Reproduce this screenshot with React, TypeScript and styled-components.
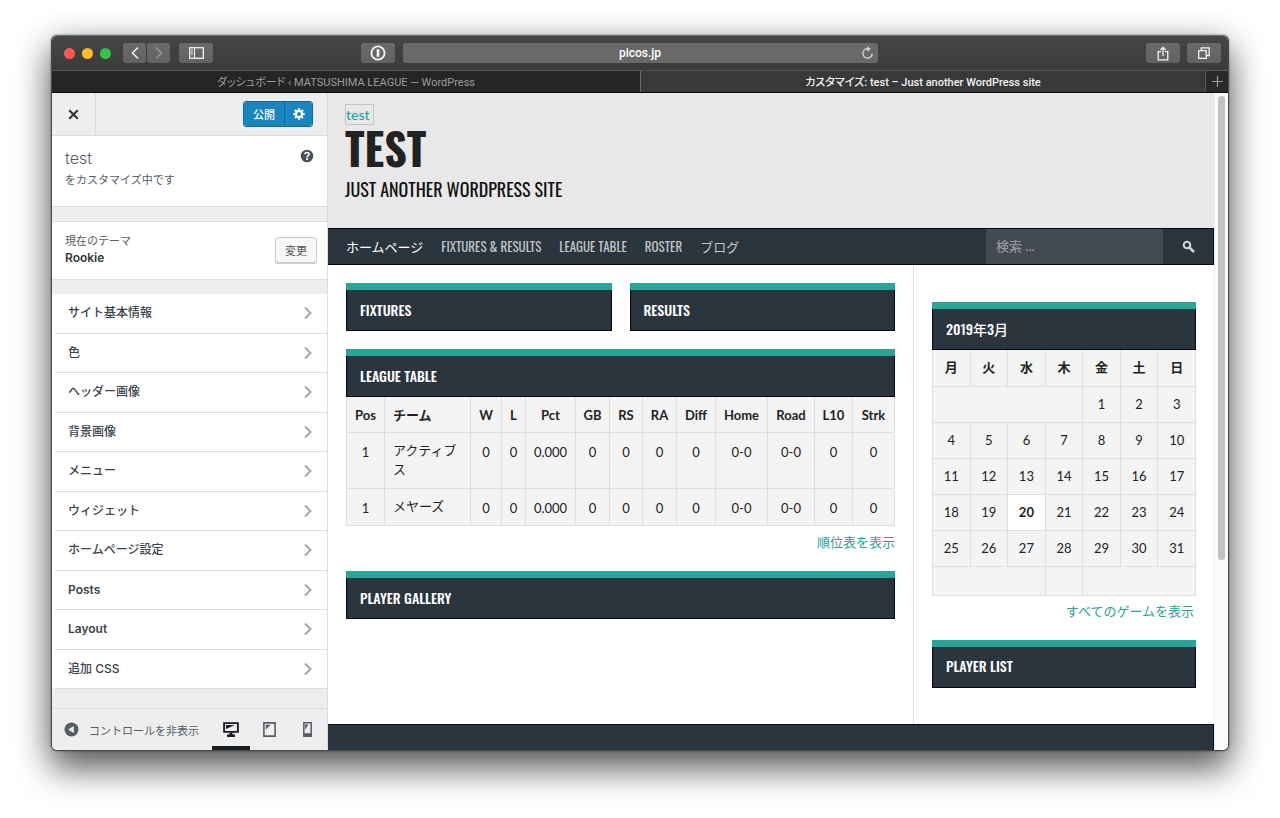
import React from "react";
import styled, { createGlobalStyle } from "styled-components";

const ui = `Roboto, "Noto Sans CJK JP", sans-serif`;
const uiWide = `Inter, "Noto Sans CJK JP", sans-serif`;
const body = `Lato, "Noto Sans CJK JP", sans-serif`;
const display = `Oswald, "Noto Sans CJK JP", sans-serif`;
const navy = "#2b353e";
const edge = "#05090d";
const teal = "#26a598";
const line = "#dfdfdf";

const GlobalStyle = createGlobalStyle`
  *, *::before, *::after { box-sizing: border-box; }
  body { margin: 0; background: #fff; font-family: ${ui}; font-size: 12px; color: #222; }
  button, input { font: inherit; margin: 0; }
  h1, h2, h3, p, ul { margin: 0; padding: 0; }
  ul { list-style: none; }
  a { text-decoration: none; }
`;

const Desktop = styled.div`
  padding: 35px 51px 67px;
  min-height: 100vh;
  display: flex;
`;

const BrowserWindow = styled.div`
  flex: 1;
  min-width: 0;
  display: flex;
  flex-direction: column;
  border: 1px solid #4a4a4a;
  border-top-color: #6e6e6e;
  border-radius: 6px;
  overflow: hidden;
  background: #fff;
  box-shadow: 0 0 2px rgba(0, 0, 0, 0.5), 0 18px 34px rgba(0, 0, 0, 0.58), 0 4px 36px rgba(0, 0, 0, 0.2);
`;

/* ---------- browser chrome ---------- */

const Toolbar = styled.header`
  height: 34px;
  display: flex;
  align-items: center;
  gap: 8px;
  padding: 0 7px;
  background: linear-gradient(#474646, #3c3b3b);
`;

const ToolbarSide = styled.div<{ $end?: boolean }>`
  flex: 1;
  display: flex;
  align-items: center;
  gap: 7px;
  justify-content: ${(p) => (p.$end ? "flex-end" : "space-between")};
`;

const Cluster = styled.div<{ $gap: number }>`
  display: flex;
  align-items: center;
  gap: ${(p) => p.$gap}px;
`;

const Lights = styled(Cluster)`
  padding: 0 3px 0 5px;
`;

const Light = styled.button<{ $color: string }>`
  width: 11px;
  height: 11px;
  padding: 0;
  border: 0;
  border-radius: 50%;
  background: ${(p) => p.$color};
`;

const ToolButton = styled.button<{ $narrow?: boolean; $dim?: boolean }>`
  width: ${(p) => (p.$narrow ? 23 : 34)}px;
  height: 20px;
  padding: 0;
  border: 0;
  border-radius: 3px;
  display: grid;
  place-items: center;
  background: linear-gradient(#6b6a6a, #636262);
  color: ${(p) => (p.$dim ? "#959595" : "#f2f2f2")};
`;

const AddressBar = styled.label`
  flex: 0 1 475px;
  height: 20px;
  display: flex;
  align-items: center;
  padding: 0 4px 0 17px;
  border-radius: 3px;
  background: #6a6969;
  color: #d8d8d8;
`;

const AddressInput = styled.input`
  flex: 1;
  min-width: 0;
  border: 0;
  padding: 0;
  background: transparent;
  color: #fff;
  text-align: center;
  font-size: 12px;
  font-weight: 500;
`;

const PlainButton = styled.button`
  border: 0;
  padding: 0;
  background: transparent;
  color: inherit;
  display: grid;
  place-items: center;
`;

const TabStrip = styled.div`
  display: grid;
  grid-template-columns: 1fr 1fr;
  height: 23px;
  background: #262525;
  border-top: 1px solid #5a5959;
  border-bottom: 1px solid #0c0c0c;
`;

const TabCell = styled.div`
  display: flex;
  min-width: 0;
`;

const Tab = styled.button<{ $active?: boolean }>`
  flex: 1;
  min-width: 0;
  border: 0;
  padding: 0 0 2px;
  font-size: 11px;
  font-feature-settings: "palt";
  background: ${(p) => (p.$active ? "#3a3939" : "#262525")};
  color: ${(p) => (p.$active ? "#f2f2f2" : "#9c9c9c")};
  font-weight: ${(p) => (p.$active ? 500 : 400)};
  border-left: ${(p) => (p.$active ? "1px solid #6a6a6a" : "0")};
`;

const NewTab = styled.button`
  width: 23px;
  border: 0;
  border-left: 1px solid #565656;
  padding: 0;
  display: grid;
  place-items: center;
  background: #2a2929;
  color: #9a9a9a;
`;

const Viewport = styled.div`
  flex: 1;
  display: flex;
  min-height: 0;
`;

/* ---------- customizer ---------- */

const Panel = styled.aside`
  flex: 0 0 276px;
  display: flex;
  flex-direction: column;
  background: #eee;
  border-right: 1px solid #ddd;
`;

const PanelTop = styled.div`
  height: 43px;
  display: flex;
  align-items: center;
  justify-content: space-between;
  padding-right: 14px;
  border-bottom: 1px solid #ddd;
`;

const CloseButton = styled(PlainButton)`
  width: 44px;
  height: 42px;
  border-right: 1px solid #ddd;
  color: #333;
`;

const Publish = styled.div`
  display: flex;
  height: 26px;
  border: 1px solid #0f6ba0;
  border-radius: 3px;
  overflow: hidden;
`;

const PublishButton = styled.button<{ $wide?: boolean }>`
  width: ${(p) => (p.$wide ? 41 : 27)}px;
  border: 0;
  border-right: ${(p) => (p.$wide ? "1px solid #0f6ba0" : "0")};
  padding: 0;
  display: grid;
  place-items: center;
  background: #1b85bd;
  color: #fff;
  font-size: 11px;
  font-weight: 500;
`;

const PanelCard = styled.section<{ $tall?: boolean }>`
  height: ${(p) => (p.$tall ? 71 : 59)}px;
  display: flex;
  justify-content: space-between;
  align-items: ${(p) => (p.$tall ? "flex-start" : "center")};
  padding: ${(p) => (p.$tall ? "11px 13px 0 13px" : "0 10px 2px 13px")};
  margin-bottom: 14px;
  background: #fff;
  border-bottom: 1px solid #ddd;
  border-top: ${(p) => (p.$tall ? "0" : "1px solid #ddd")};
`;

const HelpButton = styled(PlainButton)`
  height: 18px;
`;

const SiteName = styled.h2`
  font-family: ${uiWide};
  font-size: 16px;
  line-height: 22px;
  font-weight: 300;
  color: #555d66;
`;

const Muted = styled.p<{ $loose?: boolean }>`
  font-size: 11px;
  line-height: ${(p) => (p.$loose ? 24 : 16)}px;
  color: #555d66;
`;

const ThemeName = styled.h3`
  font-family: ${uiWide};
  font-size: 12px;
  line-height: 16px;
  font-weight: 600;
  color: #32373c;
`;

const ChangeButton = styled.button`
  width: 42px;
  height: 26px;
  padding: 0;
  border: 1px solid #ccc;
  border-radius: 3px;
  background: #f7f7f7;
  box-shadow: 0 1px 0 #ccc;
  color: #555;
  font-size: 11px;
`;

const SectionList = styled.ul`
  flex: 1;
  display: flex;
  flex-direction: column;
  margin-bottom: 19px;
`;

const SectionItem = styled.li`
  flex: 1;
  display: flex;
  padding-left: 3px;
  background: #fff;
`;

const SectionButton = styled.button`
  flex: 1;
  display: flex;
  align-items: center;
  justify-content: space-between;
  padding: 0 15px 0 13px;
  border: 0;
  border-bottom: 1px solid #ddd;
  background: #fff;
  color: #3b444d;
  font-family: ${uiWide};
  font-size: 12px;
  line-height: 18px;
  svg { color: #a0a5aa; }
`;

const SectionName = styled.span<{ $cjk: boolean }>`
  font-weight: ${(p) => (p.$cjk ? 500 : 600)};
`;

const PanelFooter = styled.div`
  height: 42px;
  display: flex;
  padding-right: 1px;
  border-top: 1px solid #ddd;
  color: #555d66;
`;

const Collapse = styled(PlainButton)`
  display: flex;
  align-items: center;
  gap: 10px;
  flex: 1;
  padding-left: 12px;
  font-size: 11px;
  white-space: nowrap;
`;

const Device = styled(PlainButton)<{ $active?: boolean }>`
  width: 38px;
  box-shadow: inset 0 -4px ${(p) => (p.$active ? "#191e23" : "transparent")};
  color: ${(p) => (p.$active ? "#191e23" : "#555d66")};
`;

/* ---------- site preview ---------- */

const Site = styled.div`
  flex: 1;
  min-width: 0;
  display: flex;
  flex-direction: column;
  font-family: ${body};
  font-size: 13px;
  background: #fff;
`;

const SiteHeader = styled.header`
  height: 135px;
  padding: 11px 17px 0;
  background: #e8e8e8;
`;

const HeaderLink = styled.a`
  display: block;
  width: fit-content;
  padding: 0 3px 0 0;
  border: 1px solid #c4c4c4;
  color: #1aa899;
  font-size: 14px;
  line-height: 19px;
  font-weight: 500;
`;

const SiteTitle = styled.h1`
  font-family: ${display};
  font-size: 44px;
  line-height: 46px;
  font-weight: 700;
  color: #222;
`;

const Tagline = styled.p`
  font-family: ${display};
  font-size: 18px;
  line-height: 36px;
  color: #111;
`;

const Nav = styled.nav`
  height: 37px;
  display: flex;
  align-items: stretch;
  justify-content: space-between;
  background: ${navy};
  border: solid ${edge};
  border-width: 1px 1px 1px 0;
`;

const NavLinks = styled.ul`
  display: flex;
  align-items: center;
  gap: 18px;
  padding: 0 0 2px 18px;
`;

const NavLink = styled.a<{ $current?: boolean }>`
  font-family: ${display};
  font-size: 13px;
  line-height: 20px;
  white-space: nowrap;
  color: ${(p) => (p.$current ? "#fff" : "#c2c5c7")};
`;

const Search = styled.form`
  display: flex;
`;

const SearchInput = styled.input`
  width: 177px;
  border: 0;
  padding: 0 10px 2px;
  background: #434a53;
  color: #fff;
  &::placeholder { color: #a0a3a6; opacity: 1; }
`;

const SearchButton = styled(PlainButton)`
  width: 50px;
  color: #d4d7d9;
`;

const Columns = styled.div`
  display: flex;
  height: 459px;
`;

const Main = styled.main`
  flex: 1;
  min-width: 0;
  padding: 18px;
`;

const SideColumn = styled.aside`
  flex: 0 0 301px;
  padding: 37px 18px 0;
  border-left: 1px solid ${line};
`;

const Pair = styled.div`
  display: grid;
  grid-template-columns: 1fr 1fr;
  gap: 18px;
  margin-bottom: 18px;
`;

const Banner = styled.h2`
  height: 48px;
  display: flex;
  align-items: center;
  padding: 0 14px 2px;
  background: ${navy};
  border-top: 7px solid ${teal};
  box-shadow: inset 1px 0 ${edge}, inset -1px -1px ${edge};
  color: #fff;
  font-family: ${display};
  font-size: 14px;
  line-height: 20px;
  font-weight: 500;
`;

const Table = styled.table`
  width: 100%;
  table-layout: fixed;
  border-collapse: collapse;
  background: #f4f4f4;
  font-size: 13px;
  line-height: 19px;
  color: #222;
`;

const LeagueCell = styled.td<{ $left?: boolean }>`
  border: 1px solid ${line};
  border-top-width: ${(p) => (p.as === "th" ? 0 : 1)}px;
  padding: ${(p) => (p.as === "th" ? "9px 0 7px" : p.$left ? "8px 8px 9px" : "10px 0 7px")};
  text-align: ${(p) => (p.$left ? "left" : "center")};
  padding-left: ${(p) => (p.$left ? 8 : 0)}px;
  vertical-align: top;
  font-weight: ${(p) => (p.as === "th" ? 700 : 400)};
`;

const DayCell = styled.td<{ $today?: boolean; $last?: boolean }>`
  height: ${(p) => (p.$last ? 29 : 36)}px;
  border: 1px solid ${line};
  border-top-width: ${(p) => (p.as === "th" ? 0 : 1)}px;
  padding: 0;
  text-align: center;
  background: ${(p) => (p.$today ? "#fff" : "transparent")};
  font-weight: ${(p) => (p.$today || p.as === "th" ? 700 : 400)};
`;

const MoreLink = styled.p<{ $inset?: boolean }>`
  text-align: right;
  padding: ${(p) => (p.$inset ? "6px 2px 19px" : "7px 0 19px")};
  line-height: 19px;
  a { color: ${teal}; }
`;

const SiteFooter = styled.footer`
  flex: 1;
  min-height: 25px;
  background: ${navy};
  border: 1px solid ${edge};
  border-width: 1px 1px 0 0;
`;

const ScrollTrack = styled.div`
  flex: 0 0 14px;
  padding: 3px 3px 0 3px;
  background: #fafafa;
  border-left: 1px solid #ebebeb;
`;

const ScrollThumb = styled.div`
  width: 7px;
  height: 71%;
  border-radius: 4px;
  background: #c1c1c1;
`;

/* ---------- icons ---------- */

const Svg = ({ w, h, box, children }: { w: number; h: number; box: string; children: React.ReactNode }) => (
  <svg width={w} height={h} viewBox={box} fill="none" stroke="currentColor" strokeWidth="1.4" aria-hidden="true">
    {children}
  </svg>
);

const Chevron = ({ left, bold }: { left?: boolean; bold?: boolean }) => (
  <Svg w={8} h={14} box="0 0 8 14">
    <path d={left ? "M7 1.5 1.5 7 7 12.5" : "M1 1.5 6.5 7 1 12.5"} strokeWidth={bold ? 1.9 : 1.5} />
  </Svg>
);

const SidebarIcon = () => (
  <Svg w={15} h={12} box="0 0 15 12">
    <rect x=".7" y=".7" width="13.6" height="10.6" strokeWidth="1.3" />
    <path d="M5.5 1v10" strokeWidth="1.1" />
    <path d="M2 3h2M2 5h2M2 7h2" strokeWidth="1" />
  </Svg>
);

const KeyholeIcon = () => (
  <Svg w={16} h={16} box="0 0 16 16">
    <circle cx="8" cy="8" r="6.6" strokeWidth="1.9" />
    <path d="M6.6 4.2h2.8v3.2L8.8 8l.6.6v3.2H6.6V8.600l.6-.6-.6-.6z" fill="currentColor" stroke="none" />
  </Svg>
);

const ReloadIcon = () => (
  <Svg w={13} h={14} box="0 0 13 14">
    <path d="M7 2.8A4.7 4.7 0 1 0 11.2 7.4" strokeWidth="1.3" />
    <path d="M6.3.3 9.8 2.9 6.3 5.5z" fill="currentColor" stroke="none" />
  </Svg>
);

const ShareIcon = () => (
  <Svg w={12} h={15} box="0 0 12 15">
    <path d="M4 5.6H1.2v8.2h9.6V5.6H8M6 10V1.5M3.4 4 6 1.4 8.6 4" strokeWidth="1.3" />
  </Svg>
);

const TabsIcon = () => (
  <Svg w={12} h={12} box="0 0 12 12">
    <path d="M.7 3.7h7.6v7.6H.7z" strokeWidth="1.3" />
    <path d="M3.3 3.4V.8h7.9v7.7H8.6" strokeWidth="1.3" />
  </Svg>
);

const PlusIcon = () => (
  <Svg w={11} h={11} box="0 0 11 11">
    <path d="M5.5 0v11M0 5.5h11" strokeWidth="1.2" />
  </Svg>
);

const CloseIcon = () => (
  <Svg w={11} h={11} box="0 0 11 11">
    <path d="m1.2 1.2 8.6 8.6M9.8 1.2 1.2 9.8" strokeWidth="2.1" />
  </Svg>
);

const GearIcon = () => (
  <Svg w={12} h={12} box="0 0 12 12">
    <circle cx="6" cy="6" r="3.1" strokeWidth="2.2" />
    <path
      d="M6 .3v2M6 9.7v2M.3 6h2M9.7 6h2M2 2l1.3 1.3M8.7 8.7 10 10M10 2 8.7 3.3M3.3 8.7 2 10"
      strokeWidth="2.1"
    />
  </Svg>
);

const HelpIcon = () => (
  <Svg w={14} h={14} box="0 0 14 14">
    <circle cx="7" cy="7" r="6.3" fill="#4a525b" stroke="none" />
    <path d="M4.9 5.3C5 4 6 3.5 7 3.5C8.3 3.5 9.1 4.2 9.1 5.2C9.1 6.6 7.1 6.7 7.1 8.4" stroke="#fff" strokeWidth="1.6" />
    <path d="M6.2 9.3H8V11H6.2z" fill="#fff" stroke="none" />
  </Svg>
);

const CollapseIcon = () => (
  <Svg w={15} h={15} box="0 0 15 15">
    <circle cx="7.5" cy="7.5" r="7" fill="currentColor" stroke="none" />
    <path d="M9.8 3.9v7.2L4.2 7.5z" fill="#eee" stroke="none" />
  </Svg>
);

const DesktopIcon = () => (
  <Svg w={16} h={15} box="0 0 16 15">
    <path d="M1.1 1.1h13.8v8.8H1.1z" strokeWidth="1.9" />
    <path d="M3 3h8.5L7 5.2 3 7z" fill="currentColor" stroke="none" />
    <path d="M6.5 10.5h3v2H12V15H4v-2.5h2.5z" fill="currentColor" stroke="none" />
  </Svg>
);

const TabletIcon = () => (
  <Svg w={13} h={15} box="0 0 13 15">
    <path d="M.9.9h11.2v13.2H.9z" strokeWidth="1.6" />
    <path d="M2.8 2.8h5L2.8 7.5z" fill="currentColor" stroke="none" />
  </Svg>
);

const PhoneIcon = () => (
  <Svg w={9} h={15} box="0 0 9 15">
    <path d="M.8.8h7.4v13.4H.8z" strokeWidth="1.5" />
    <path d="M2 2.5h3.5L2 7.5zM1 11.3h7V14H1z" fill="currentColor" stroke="none" />
  </Svg>
);

const SearchIcon = () => (
  <Svg w={13} h={13} box="0 0 13 13">
    <circle cx="5" cy="5" r="3.3" strokeWidth="2" />
    <path d="m7.5 7.5 3.8 3.8" strokeWidth="2.6" strokeLinecap="round" />
  </Svg>
);

/* ---------- data ---------- */

const sections = [
  "サイト基本情報", "色", "ヘッダー画像", "背景画像", "メニュー",
  "ウィジェット", "ホームページ設定", "Posts", "Layout", "追加 CSS",
];

const links = ["ホームページ", "FIXTURES & RESULTS", "LEAGUE TABLE", "ROSTER", "ブログ"];

const leagueColumns: [string, number][] = [
  ["Pos", 38], ["チーム", 86], ["W", 31], ["L", 24], ["Pct", 50], ["GB", 34], ["RS", 33],
  ["RA", 34], ["Diff", 39], ["Home", 52], ["Road", 47], ["L10", 38], ["Strk", 42],
];

const standings = ["アクティブス", "メヤーズ"].map((team) => [
  "1", team, "0", "0", "0.000", "0", "0", "0", "0", "0-0", "0-0", "0", "0",
]);

const weekdays = ["月", "火", "水", "木", "金", "土", "日"];
const weeks = [4, 11, 18, 25].map((first) => weekdays.map((_, i) => first + i));

/* ---------- page ---------- */

const Chrome = () => (
  <>
    <Toolbar>
      <ToolbarSide>
        <Cluster $gap={9}>
          <Lights $gap={7}>
            <Light $color="#fc5753" aria-label="Close window" />
            <Light $color="#fdbc2e" aria-label="Minimize" />
            <Light $color="#33c748" aria-label="Zoom" />
          </Lights>
          <Cluster $gap={1}>
            <ToolButton $narrow aria-label="Back"><Chevron left /></ToolButton>
            <ToolButton $narrow $dim aria-label="Forward"><Chevron /></ToolButton>
          </Cluster>
          <ToolButton aria-label="Sidebar"><SidebarIcon /></ToolButton>
        </Cluster>
        <ToolButton aria-label="Passwords"><KeyholeIcon /></ToolButton>
      </ToolbarSide>
      <AddressBar>
        <AddressInput aria-label="Address" defaultValue="picos.jp" />
        <PlainButton aria-label="Reload"><ReloadIcon /></PlainButton>
      </AddressBar>
      <ToolbarSide $end>
        <ToolButton aria-label="Share"><ShareIcon /></ToolButton>
        <ToolButton aria-label="Show tabs"><TabsIcon /></ToolButton>
      </ToolbarSide>
    </Toolbar>
    <TabStrip>
      <TabCell><Tab>ダッシュボード ‹ MATSUSHIMA LEAGUE — WordPress</Tab></TabCell>
      <TabCell>
        <Tab $active>カスタマイズ: test – Just another WordPress site</Tab>
        <NewTab aria-label="New tab"><PlusIcon /></NewTab>
      </TabCell>
    </TabStrip>
  </>
);

const Customizer = () => (
  <Panel>
    <PanelTop>
      <CloseButton aria-label="Close"><CloseIcon /></CloseButton>
      <Publish>
        <PublishButton $wide>公開</PublishButton>
        <PublishButton aria-label="Settings"><GearIcon /></PublishButton>
      </Publish>
    </PanelTop>
    <PanelCard $tall>
      <div>
        <SiteName>test</SiteName>
        <Muted $loose>をカスタマイズ中です</Muted>
      </div>
      <HelpButton aria-label="Help"><HelpIcon /></HelpButton>
    </PanelCard>
    <PanelCard>
      <div>
        <Muted>現在のテーマ</Muted>
        <ThemeName>Rookie</ThemeName>
      </div>
      <ChangeButton>変更</ChangeButton>
    </PanelCard>
    <SectionList>
      {sections.map((name) => (
        <SectionItem key={name}>
          <SectionButton>
            <SectionName $cjk={name.charCodeAt(0) > 255}>{name}</SectionName>
            <Chevron bold />
          </SectionButton>
        </SectionItem>
      ))}
    </SectionList>
    <PanelFooter>
      <Collapse><CollapseIcon />コントロールを非表示</Collapse>
      <Device $active aria-label="Desktop"><DesktopIcon /></Device>
      <Device aria-label="Tablet"><TabletIcon /></Device>
      <Device aria-label="Phone"><PhoneIcon /></Device>
    </PanelFooter>
  </Panel>
);

const League = () => (
  <section>
    <Banner>LEAGUE TABLE</Banner>
    <Table>
      <colgroup>{leagueColumns.map(([name, w]) => <col key={name} width={w} />)}</colgroup>
      <thead>
        <tr>
          {leagueColumns.map(([name], i) => (
            <LeagueCell as="th" key={name} $left={i === 1}>{name}</LeagueCell>
          ))}
        </tr>
      </thead>
      <tbody>
        {standings.map((row) => (
          <tr key={row[1]}>
            {row.map((value, i) => <LeagueCell key={i} $left={i === 1}>{value}</LeagueCell>)}
          </tr>
        ))}
      </tbody>
    </Table>
    <MoreLink><a href="#table">順位表を表示</a></MoreLink>
  </section>
);

const Calendar = () => (
  <section>
    <Banner>2019年3月</Banner>
    <Table>
      <thead>
        <tr>{weekdays.map((d) => <DayCell as="th" key={d}>{d}</DayCell>)}</tr>
      </thead>
      <tbody>
        <tr>
          <DayCell colSpan={4} />
          {[1, 2, 3].map((d) => <DayCell key={d}>{d}</DayCell>)}
        </tr>
        {weeks.map((week) => (
          <tr key={week[0]}>{week.map((d) => <DayCell key={d} $today={d === 20}>{d}</DayCell>)}</tr>
        ))}
      </tbody>
      <tfoot>
        <tr>
          <DayCell $last colSpan={3} />
          <DayCell $last />
          <DayCell $last colSpan={3} />
        </tr>
      </tfoot>
    </Table>
    <MoreLink $inset><a href="#games">すべてのゲームを表示</a></MoreLink>
  </section>
);

const Preview = () => (
  <Site>
    <SiteHeader>
      <HeaderLink href="#home">test</HeaderLink>
      <SiteTitle>TEST</SiteTitle>
      <Tagline>JUST ANOTHER WORDPRESS SITE</Tagline>
    </SiteHeader>
    <Nav>
      <NavLinks>
        {links.map((name, i) => (
          <li key={name}><NavLink href="#nav" $current={i === 0}>{name}</NavLink></li>
        ))}
      </NavLinks>
      <Search>
        <SearchInput type="search" aria-label="検索" placeholder="検索 ..." />
        <SearchButton type="button" aria-label="Search"><SearchIcon /></SearchButton>
      </Search>
    </Nav>
    <Columns>
      <Main>
        <Pair>
          <Banner>FIXTURES</Banner>
          <Banner>RESULTS</Banner>
        </Pair>
        <League />
        <Banner>PLAYER GALLERY</Banner>
      </Main>
      <SideColumn>
        <Calendar />
        <Banner>PLAYER LIST</Banner>
      </SideColumn>
    </Columns>
    <SiteFooter />
  </Site>
);

export default function App() {
  return (
    <>
      <GlobalStyle />
      <Desktop>
        <BrowserWindow>
          <Chrome />
          <Viewport>
            <Customizer />
            <Preview />
            <ScrollTrack><ScrollThumb /></ScrollTrack>
          </Viewport>
        </BrowserWindow>
      </Desktop>
    </>
  );
}
